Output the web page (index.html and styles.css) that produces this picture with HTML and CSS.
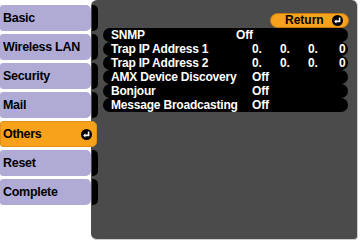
FILE: index.html
```html
<!DOCTYPE html>
<html>
  <head>
    <meta charset="utf-8">
    <title>Network - Others</title>
    <link rel="stylesheet" href="styles.css">
  </head>
  <body>
    <div class="screen">
      <div class="menu">
        <div class="tab">Basic</div>
        <div class="tab">Wireless LAN</div>
        <div class="tab">Security</div>
        <div class="tab">Mail</div>
        <div class="tab active">Others
          <svg class="enter" width="11" height="11" viewBox="0 0 11 11"><circle cx="5.5" cy="5.5" r="5.5" fill="#000"/><path d="M7.6 2.6 V6.4 H3.6" fill="none" stroke="#fff" stroke-width="1.6"/><path d="M2.2 6.4 L4.4 4.3 V8.5 Z" fill="#fff"/></svg>
        </div>
        <div class="tab">Reset</div>
        <div class="tab">Complete</div>
      </div>
      <div class="panel">
        <div class="topbar">
          <div class="return">Return
            <svg class="enter" width="11" height="11" viewBox="0 0 11 11"><circle cx="5.5" cy="5.5" r="5.5" fill="#000"/><path d="M7.6 2.6 V6.4 H3.6" fill="none" stroke="#fff" stroke-width="1.6"/><path d="M2.2 6.4 L4.4 4.3 V8.5 Z" fill="#fff"/></svg>
          </div>
        </div>
        <div class="rows">
          <div class="row"><span class="label">SNMP</span><span class="value snmp">Off</span></div>
          <div class="row"><span class="label">Trap IP Address 1</span><span class="ip"><span>0.</span><span>0.</span><span>0.</span><span>0</span></span></div>
          <div class="row"><span class="label">Trap IP Address 2</span><span class="ip"><span>0.</span><span>0.</span><span>0.</span><span>0</span></span></div>
          <div class="row"><span class="label">AMX Device Discovery</span><span class="value">Off</span></div>
          <div class="row"><span class="label">Bonjour</span><span class="value">Off</span></div>
          <div class="row"><span class="label">Message Broadcasting</span><span class="value">Off</span></div>
        </div>
      </div>
    </div>
  </body>
</html>
```

FILE: styles.css
```css
* {
  box-sizing: border-box;
}
body {
  margin: 0;
  background: #fff;
  font-family: "Liberation Sans", Arial, sans-serif;
  font-weight: bold;
}
.screen {
  display: flex;
  width: 360px;
  height: 241px;
}
.menu {
  width: 91px;
  flex: none;
  display: flex;
  flex-direction: column;
  gap: 3px;
  padding-top: 5px;
  position: relative;
  z-index: 1;
}
.tab {
  position: relative;
  height: 26px;
  background: #b0abd5;
  border-radius: 3px 5px 5px 3px;
  font-size: 12.5px;
  letter-spacing: -0.3px;
  line-height: 26px;
  padding-left: 3px;
  color: #000;
}
.tab::after {
  content: "";
  position: absolute;
  left: 92px;
  top: 0;
  width: 6px;
  height: 26px;
  background: #000;
  border-radius: 0 5px 5px 0;
}
.tab.active {
  background: #f8a21c;
  width: 97px;
  border: 1px solid #e09018;
  line-height: 24px;
  padding-left: 2px;
}
.tab.active::after {
  display: none;
}
.tab .enter {
  position: absolute;
  right: 4px;
  top: 7px;
}
.panel {
  flex: none;
  width: 267px;
  height: 240px;
  background: #4b4b4b;
  border-radius: 6px 6px 4px 6px;
  border-right: 1px solid #cfcfcf;
  border-bottom: 1px solid #cfcfcf;
  padding: 13px 9px 0 12px;
}
.topbar {
  display: flex;
  justify-content: flex-end;
  height: 15px;
}
.return {
  width: 79px;
  height: 15px;
  margin-right: -1px;
  background: #f8a21c;
  border: 1px solid #c57a10;
  border-radius: 8px;
  color: #000;
  font-size: 12px;
  line-height: 13px;
  padding-left: 14px;
  display: flex;
  align-items: center;
  gap: 8px;
}
.rows {
  display: flex;
  flex-direction: column;
}
.row {
  height: 14px;
  background: #000;
  border-radius: 7px;
  color: #fff;
  font-size: 12px;
  letter-spacing: -0.2px;
  line-height: 14px;
  display: flex;
  padding-left: 8px;
}
.label {
  width: 141px;
  flex: none;
}
.value.snmp {
  margin-left: -16px;
}
.ip {
  display: flex;
}
.ip span {
  width: 28px;
}
.ip span:last-child {
  width: 10px;
  margin-left: 3px;
}
```
